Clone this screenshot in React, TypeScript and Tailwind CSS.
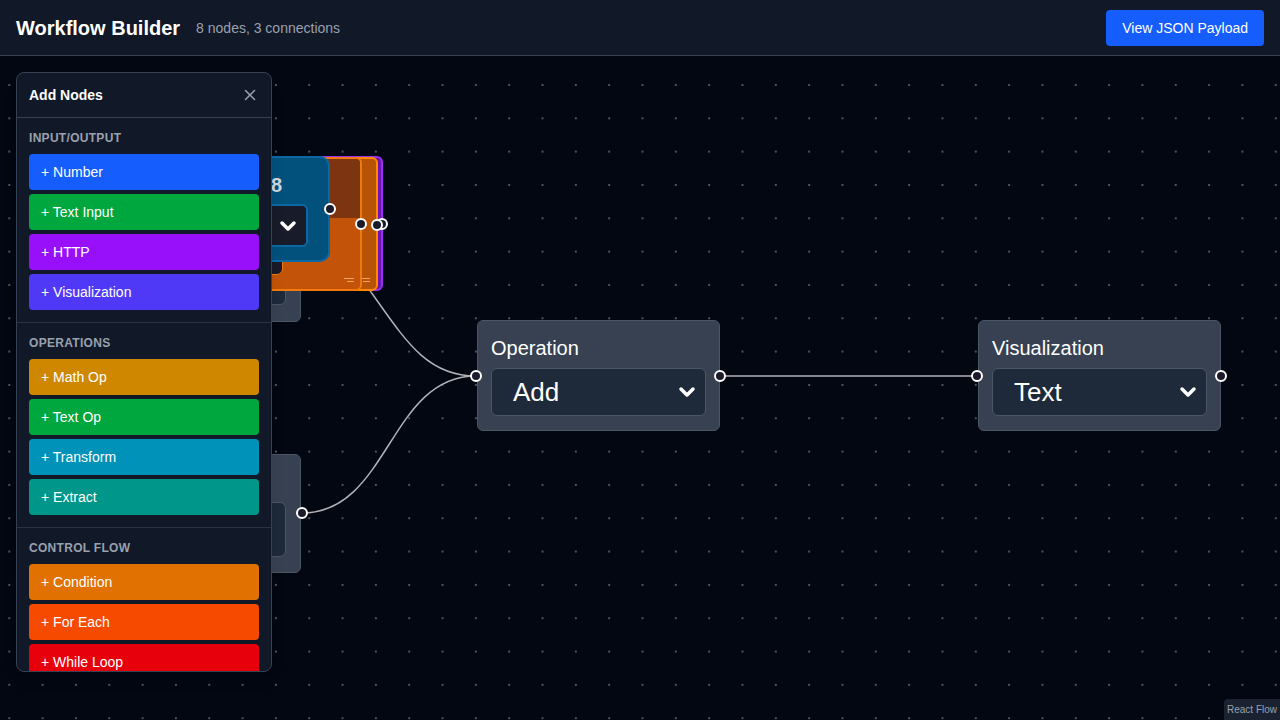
import React from 'react'
import { X, ChevronDown } from 'lucide-react'

const sections = [
  {
    title: 'Input/Output',
    items: [
      { label: 'Number', color: 'bg-blue-600' },
      { label: 'Text Input', color: 'bg-green-600' },
      { label: 'HTTP', color: 'bg-purple-600' },
      { label: 'Visualization', color: 'bg-indigo-600' },
    ],
  },
  {
    title: 'Operations',
    items: [
      { label: 'Math Op', color: 'bg-yellow-600' },
      { label: 'Text Op', color: 'bg-green-600' },
      { label: 'Transform', color: 'bg-cyan-600' },
      { label: 'Extract', color: 'bg-teal-600' },
    ],
  },
  {
    title: 'Control Flow',
    items: [
      { label: 'Condition', color: 'bg-amber-600' },
      { label: 'For Each', color: 'bg-orange-600' },
      { label: 'While Loop', color: 'bg-red-600' },
    ],
  },
]

function Handle({ side, className = '' }: { side: 'left' | 'right'; className?: string }) {
  return (
    <span
      className={`absolute w-3 h-3 rounded-full border-2 border-white bg-[#1c1b2b] ${
        side === 'left' ? '-left-[8px]' : '-right-[7px]'
      } ${className}`}
    />
  )
}

function FakeSelect({ value }: { value: string }) {
  return (
    <div className="flex items-center justify-between h-12 rounded-md border border-[#4a5565] bg-[#1e2939] pl-[21px] pr-[6px]">
      <span className="text-[26px] leading-none text-white">{value}</span>
      <ChevronDown size={24} strokeWidth={3.5} className="text-white" />
    </div>
  )
}

function BigNode({ title, value, left }: { title: string; value: string; left: string }) {
  return (
    <div
      className={`absolute top-[264px] ${left} w-[243px] h-[111px] rounded-md border border-[#4a5565] bg-[#374151] px-[13px] pt-[14px]`}
    >
      <div className="text-[20px] leading-[26px] text-white mb-[7px]">{title}</div>
      <FakeSelect value={value} />
      <Handle side="left" className="top-1/2 -translate-y-1/2" />
      <Handle side="right" className="top-1/2 -translate-y-1/2" />
    </div>
  )
}

export default function App() {
  return (
    <div className="h-screen w-full flex flex-col bg-[#030712] font-['Liberation_Sans',Arial,sans-serif] overflow-hidden">
      <header className="h-14 shrink-0 flex items-center justify-between px-4 bg-[#111827] border-b border-[#364153]">
        <div className="flex items-center gap-4">
          <h1 className="text-[20px] font-bold text-white">Workflow Builder</h1>
          <span className="text-sm text-gray-400">8 nodes, 3 connections</span>
        </div>
        <button className="px-4 py-2 text-sm text-white bg-blue-600 rounded">View JSON Payload</button>
      </header>

      <div className="relative flex-1 overflow-hidden bg-[radial-gradient(circle,#4a5565_1px,transparent_1.3px)] bg-[size:33.333px_33.333px] bg-[position:-7.4px_12.3px]">
        {/* edges */}
        <svg className="absolute inset-0 w-full h-full" fill="none" stroke="#b1b1b7" strokeWidth={1.5}>
          <path d="M 355 214 C 400 274 420 320 476 320" />
          <path d="M 302 457 C 389 457 389 320 476 320" />
          <path d="M 720 320 L 977 320" />
        </svg>

        {/* stacked nodes, top-left */}
        <div className="absolute left-[150px] top-[120px] w-[151px] h-[146px] rounded-md border border-[#4a5565] bg-[#374151] flex flex-col justify-end px-[14px] pb-[16px]">
          <div className="h-12 rounded-md border border-[#4a5565] bg-[#1e2939]" />
        </div>
        <div className="absolute left-[150px] top-[100px] w-[233px] h-[135px] rounded-md border-2 border-[#9b2ef5] bg-[#6d12b3]">
          <Handle side="right" className="top-[60px] -right-[7px]" />
        </div>
        <div className="absolute left-[150px] top-[101px] w-[228px] h-[134px] rounded-md border-2 border-[#ff8a00] bg-[#b85206]">
          <Handle side="right" className="top-[60px] -right-[6px]" />
          <div className="absolute right-[6px] bottom-[7px] flex flex-col gap-[2px] items-end">
            <span className="w-[10px] h-[1px] bg-[#f4a060]" />
            <span className="w-[7px] h-[1px] bg-[#f4a060]" />
          </div>
        </div>
        <div className="absolute left-[150px] top-[101px] w-[212px] h-[134px] rounded-md border-2 border-[#f07a10] bg-[#c25308] flex flex-col overflow-visible">
          <div className="h-[59px] rounded-t-[4px] bg-[#7c3510]" />
          <div className="pt-[12px] pl-[14px]">
            <div className="w-[117px] h-[45px] rounded-md border border-[#f07a10] bg-[#1a1b2a]" />
          </div>
          <div className="absolute right-[6px] bottom-[7px] flex flex-col gap-[2px] items-end">
            <span className="w-[10px] h-[1px] bg-[#f4a060]" />
            <span className="w-[7px] h-[1px] bg-[#f4a060]" />
          </div>
          <Handle side="right" className="top-[59px] -right-[7px]" />
        </div>
        <div className="absolute left-[180px] top-[100px] w-[150px] h-[106px] rounded-[10px] border-2 border-[#0a69a3] bg-[#01517c] px-[14px] pt-[15px]">
          <div className="text-right pr-[32px] text-[20px] leading-[24px] font-bold text-gray-300">Value 8</div>
          <div className="mt-[7px] ml-auto mr-[6px] w-[110px] h-[43px] rounded-md border-2 border-[#0a69a3] bg-[#181b29] flex items-center justify-end pr-[6px]">
            <ChevronDown size={24} strokeWidth={3.5} className="text-white" />
          </div>
          <Handle side="right" className="top-[45px] -right-[8px]" />
        </div>

        {/* lower-left node */}
        <div className="absolute left-[150px] top-[398px] w-[151px] h-[119px] rounded-md border border-[#4a5565] bg-[#374151] px-[14px] pt-[47px]">
          <div className="h-[55px] rounded-md border border-[#4a5565] bg-[#1e2939]" />
          <Handle side="right" className="top-[52px] -right-[8px]" />
        </div>

        <BigNode title="Operation" value="Add" left="left-[477px]" />
        <BigNode title="Visualization" value="Text" left="left-[978px]" />

        {/* sidebar */}
        <aside className="absolute left-4 top-4 w-64 h-[600px] rounded-lg border border-[#364153] bg-[#111827] overflow-hidden shadow-lg z-10">
          <div className="flex items-center justify-between px-3 py-3 border-b border-[#364153]">
            <h2 className="text-sm leading-5 font-bold text-white">Add Nodes</h2>
            <X size={18} className="text-gray-400" />
          </div>
          {sections.map((s, i) => (
            <div key={s.title} className={`p-3 ${i > 0 ? 'border-t border-[#2a3441]' : ''}`}>
              <div className="text-xs leading-4 font-bold tracking-wide uppercase text-gray-400 mb-2">{s.title}</div>
              <div className="flex flex-col gap-1">
                {s.items.map((it) => (
                  <button key={it.label} className={`h-9 w-full text-left pl-3 rounded text-sm text-white ${it.color}`}>
                    + {it.label}
                  </button>
                ))}
              </div>
            </div>
          ))}
        </aside>

        <div className="absolute right-0 bottom-0 px-[3px] py-[4px] text-[10px] leading-[13px] text-gray-400 bg-[#1a2130] rounded-tl">
          React Flow
        </div>
      </div>
    </div>
  )
}
